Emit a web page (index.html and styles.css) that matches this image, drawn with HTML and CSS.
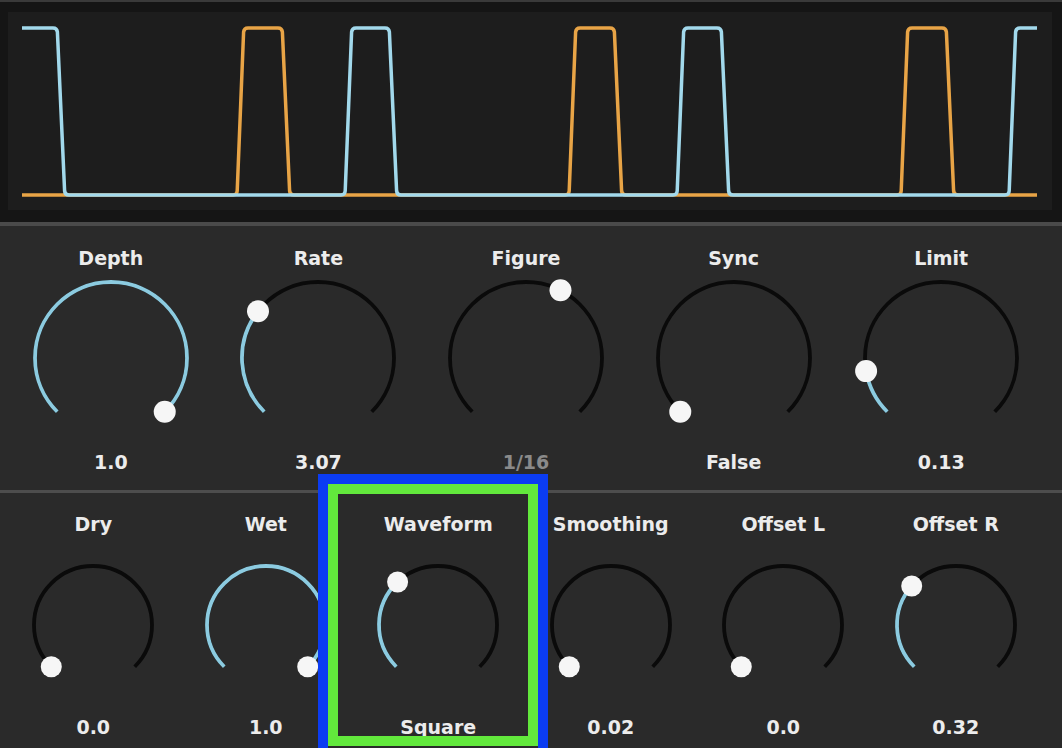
FILE: index.html
```html
<!DOCTYPE html>
<html>
<head>
<meta charset="utf-8">
<title>LFO</title>
<link rel="stylesheet" href="styles.css">
</head>
<body>
<div class="app">
  <div class="scope">
    <div class="screen">
      <svg class="wave" viewBox="8 12 1044 198" preserveAspectRatio="none">
        <path class="trace trace-orange" d="M22,195 H233 Q237,195 237.2,191 L243.6,32 Q244,28 248,28 H278 Q282,28 282.4,32 L289.6,191 Q290,195 294,195 H565 Q569,195 569.2,191 L575.6,32 Q576,28 580,28 H610 Q614,28 614.4,32 L621.6,191 Q622,195 626,195 H897 Q901,195 901.2,191 L907.6,32 Q908,28 912,28 H942 Q946,28 946.4,32 L953.6,191 Q954,195 958,195 H1037"/>
        <path class="trace trace-blue" d="M22,28 H53 Q57,28 57.4,32 L64.6,191 Q65,195 69,195 H341 Q345,195 345.2,191 L351.6,32 Q352,28 356,28 H385 Q389,28 389.4,32 L396.6,191 Q397,195 401,195 H673 Q677,195 677.2,191 L683.6,32 Q684,28 688,28 H717 Q721,28 721.4,32 L728.6,191 Q729,195 733,195 H1005 Q1009,195 1009.2,191 L1015.6,32 Q1016,28 1020,28 H1037"/>
      </svg>
    </div>
  </div>
  <div class="sep sep-top"></div>
  <div class="row row-five">
    <div class="knob">
      <div class="label">Depth</div>
      <svg class="dial dial-lg" viewBox="0 0 176 176">
        <path class="arc" d="M34.26,141.74 A76,76 0 1 1 141.74,141.74"/>
        <path class="arc-on" d="M34.26,141.74 A76,76 0 1 1 141.74,141.74"/>
        <circle class="handle" cx="141.74" cy="141.74" r="11"/>
      </svg>
      <div class="value">1.0</div>
    </div>
    <div class="knob">
      <div class="label">Rate</div>
      <svg class="dial dial-lg" viewBox="0 0 176 176">
        <path class="arc" d="M34.26,141.74 A76,76 0 1 1 141.74,141.74"/>
        <path class="arc-on" d="M34.26,141.74 A76,76 0 0 1 28.0,41.3"/>
        <circle class="handle" cx="28.0" cy="41.3" r="11"/>
      </svg>
      <div class="value">3.07</div>
    </div>
    <div class="knob">
      <div class="label">Figure</div>
      <svg class="dial dial-lg" viewBox="0 0 176 176">
        <path class="arc" d="M34.26,141.74 A76,76 0 1 1 141.74,141.74"/>
        <circle class="handle" cx="122.5" cy="20.3" r="11"/>
      </svg>
      <div class="value value-dim">1/16</div>
    </div>
    <div class="knob">
      <div class="label">Sync</div>
      <svg class="dial dial-lg" viewBox="0 0 176 176">
        <path class="arc" d="M34.26,141.74 A76,76 0 1 1 141.74,141.74"/>
        <circle class="handle" cx="34.26" cy="141.74" r="11"/>
      </svg>
      <div class="value">False</div>
    </div>
    <div class="knob">
      <div class="label">Limit</div>
      <svg class="dial dial-lg" viewBox="0 0 176 176">
        <path class="arc" d="M34.26,141.74 A76,76 0 1 1 141.74,141.74"/>
        <path class="arc-on" d="M34.26,141.74 A76,76 0 0 1 13.1,101.1"/>
        <circle class="handle" cx="13.1" cy="101.1" r="11"/>
      </svg>
      <div class="value">0.13</div>
    </div>
  </div>
  <div class="sep sep-mid"></div>
  <div class="row row-six">
    <div class="knob">
      <div class="label">Dry</div>
      <svg class="dial dial-sm" viewBox="0 0 140 140">
        <path class="arc" d="M28.28,111.72 A59,59 0 1 1 111.72,111.72"/>
        <circle class="handle" cx="28.28" cy="111.72" r="10.5"/>
      </svg>
      <div class="value">0.0</div>
    </div>
    <div class="knob">
      <div class="label">Wet</div>
      <svg class="dial dial-sm" viewBox="0 0 140 140">
        <path class="arc" d="M28.28,111.72 A59,59 0 1 1 111.72,111.72"/>
        <path class="arc-on" d="M28.28,111.72 A59,59 0 1 1 111.72,111.72"/>
        <circle class="handle" cx="111.72" cy="111.72" r="10.5"/>
      </svg>
      <div class="value">1.0</div>
    </div>
    <div class="knob">
      <div class="label">Waveform</div>
      <svg class="dial dial-sm" viewBox="0 0 140 140">
        <path class="arc" d="M28.28,111.72 A59,59 0 1 1 111.72,111.72"/>
        <path class="arc-on" d="M28.28,111.72 A59,59 0 0 1 29.6,27.0"/>
        <circle class="handle" cx="29.6" cy="27.0" r="10.5"/>
      </svg>
      <div class="value">Square</div>
    </div>
    <div class="knob">
      <div class="label">Smoothing</div>
      <svg class="dial dial-sm" viewBox="0 0 140 140">
        <path class="arc" d="M28.28,111.72 A59,59 0 1 1 111.72,111.72"/>
        <circle class="handle" cx="28.28" cy="111.72" r="10.5"/>
      </svg>
      <div class="value">0.02</div>
    </div>
    <div class="knob">
      <div class="label">Offset L</div>
      <svg class="dial dial-sm" viewBox="0 0 140 140">
        <path class="arc" d="M28.28,111.72 A59,59 0 1 1 111.72,111.72"/>
        <circle class="handle" cx="28.28" cy="111.72" r="10.5"/>
      </svg>
      <div class="value">0.0</div>
    </div>
    <div class="knob">
      <div class="label">Offset R</div>
      <svg class="dial dial-sm" viewBox="0 0 140 140">
        <path class="arc" d="M28.28,111.72 A59,59 0 1 1 111.72,111.72"/>
        <path class="arc-on" d="M28.28,111.72 A59,59 0 0 1 25.7,31.0"/>
        <circle class="handle" cx="25.7" cy="31.0" r="10.5"/>
      </svg>
      <div class="value">0.32</div>
    </div>
  </div>
  <div class="highlight"><div class="highlight-inner"></div></div>
</div>
</body>
</html>
```
FILE: styles.css
```css
* { box-sizing: border-box; }

html, body {
  margin: 0;
  padding: 0;
  background: #2a2a2a;
}

body {
  width: 1062px;
  height: 748px;
  overflow: hidden;
  font-family: "DejaVu Sans", "Liberation Sans", sans-serif;
}

.app {
  position: relative;
  width: 1062px;
  height: 748px;
  background: #2a2a2a;
  overflow: hidden;
}

.scope {
  height: 222px;
  background: #151515;
  border-top: 2px solid #3a3a3a;
  padding: 10px 10px 12px 8px;
}

.screen {
  width: 100%;
  height: 100%;
  background: #1d1d1d;
}

.wave {
  display: block;
  width: 100%;
  height: 100%;
}

.trace {
  fill: none;
  stroke-width: 3.5;
  stroke-linejoin: round;
  stroke-linecap: butt;
}

.trace-orange { stroke: #e8a446; }
.trace-blue { stroke: #a2d9ec; }

.sep { width: 100%; }
.sep-top { height: 4px; background: #4a4a4a; }
.sep-mid { height: 3px; background: #4d4d4d; }

.row {
  display: grid;
}

.row-five {
  height: 264px;
  grid-template-columns: repeat(5, 1fr);
  padding: 20px 17px 0 7px;
}

.row-six {
  height: 255px;
  grid-template-columns: repeat(6, 1fr);
  padding: 19px 20px 0 7px;
}

.knob {
  display: flex;
  flex-direction: column;
  align-items: center;
}

.label, .value {
  font-size: 19px;
  line-height: 24px;
  font-weight: bold;
  color: #ececec;
  white-space: nowrap;
}

.value-dim { color: #8a8a8a; }

.dial { display: block; overflow: visible; }

.dial-lg {
  width: 176px;
  height: 176px;
  margin-top: 0;
}

.dial-lg + .value { margin-top: 4px; }

.dial-sm {
  width: 140px;
  height: 140px;
  margin-top: 19px;
}

.dial-sm + .value { margin-top: 20px; }

.arc {
  fill: none;
  stroke: #0a0a0a;
  stroke-width: 3.8;
}

.arc-on {
  fill: none;
  stroke: #8ccbe0;
  stroke-width: 3.8;
}

.handle { fill: #f6f6f6; }

.highlight {
  position: absolute;
  left: 318px;
  top: 474px;
  width: 230px;
  height: 284px;
  border: 10px solid #0b3cf2;
}

.highlight-inner {
  width: 100%;
  height: 262px;
  border: 10px solid #62e83c;
}
```
